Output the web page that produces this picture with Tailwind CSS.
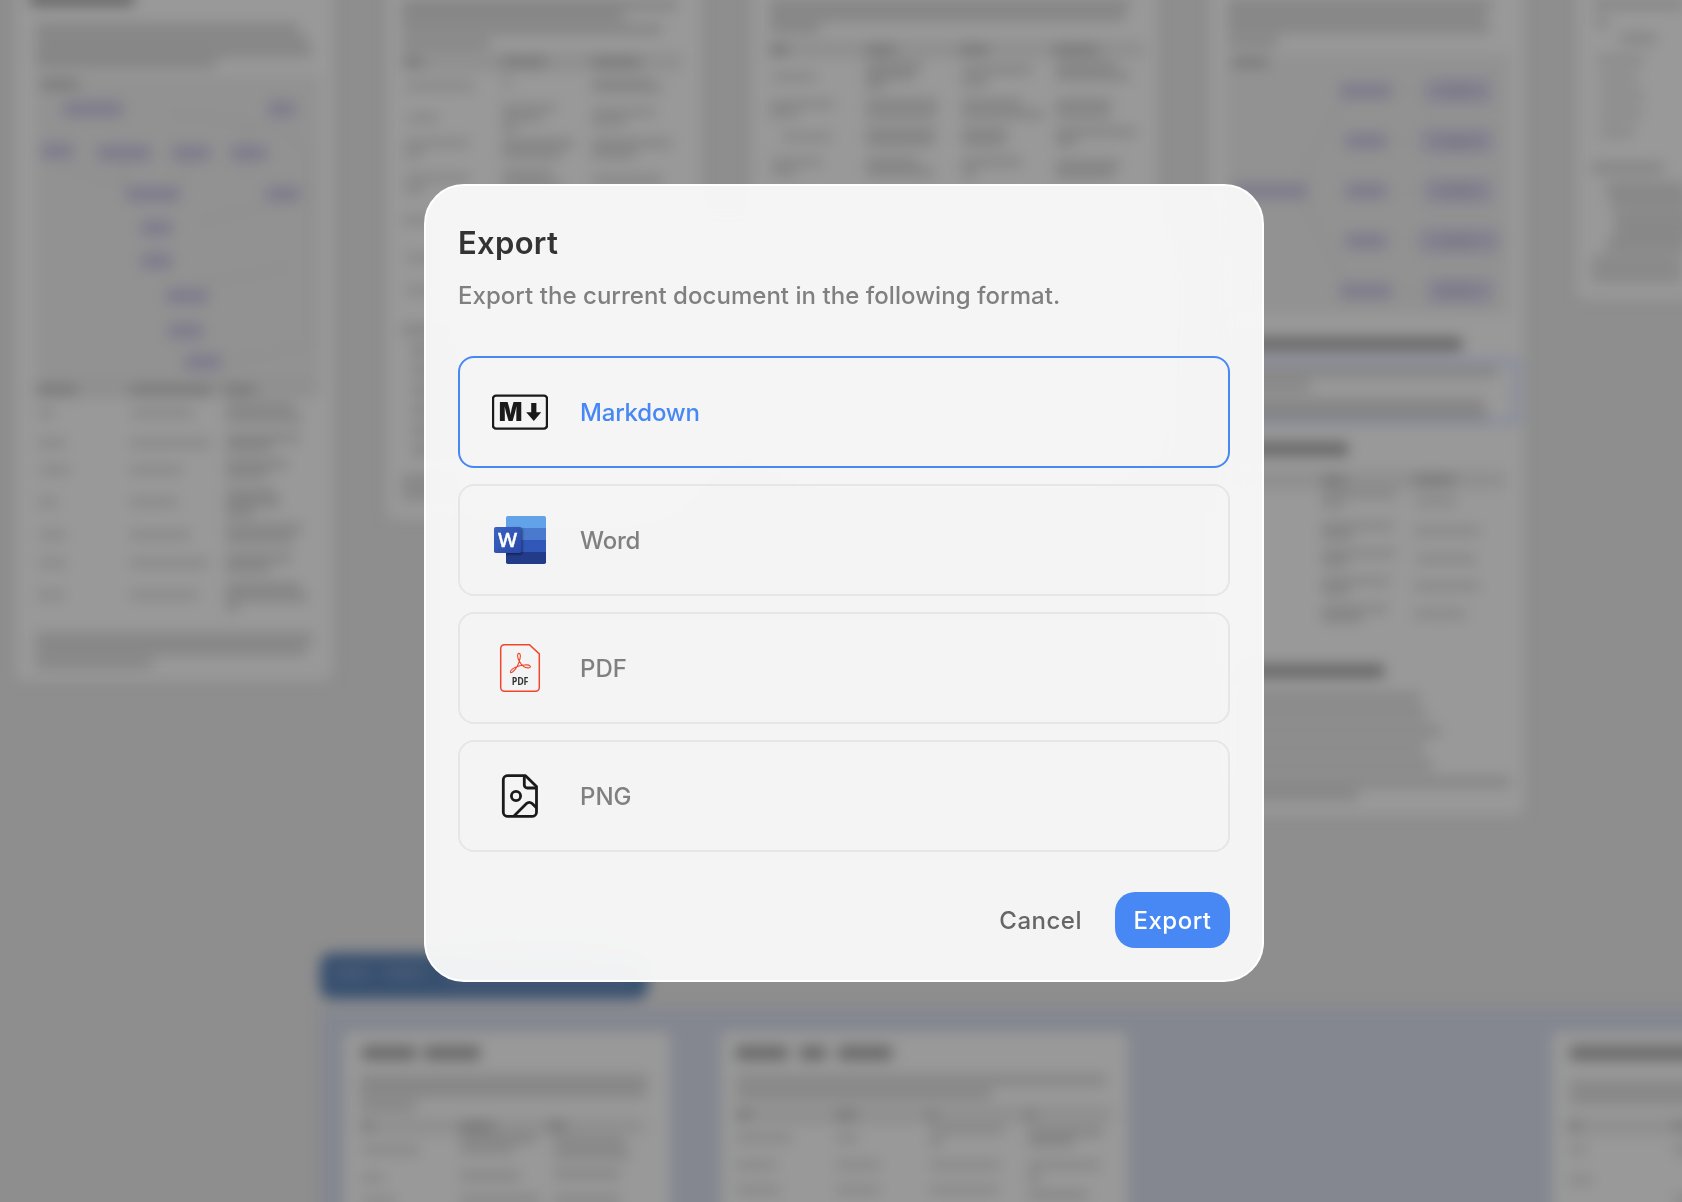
<!DOCTYPE html>
<html lang="en">
<head>
    <meta charset="UTF-8">
    <title>Export</title>
    <script src="https://cdn.jsdelivr.net/npm/@tailwindcss/browser@4"></script>
</head>
<body class="relative h-screen overflow-hidden bg-[#8e8e8e] font-['Inter',sans-serif]">
    <!-- Canvas behind the dialog -->
    <svg class="absolute inset-0" width="1682" height="1202" viewBox="0 0 1682 1202" fill="none" aria-hidden="true">
        <defs>
            <filter id="soft" filterUnits="userSpaceOnUse" x="-60" y="-60" width="1802" height="1322" color-interpolation-filters="sRGB">
                <feGaussianBlur stdDeviation="7"/>
            </filter>
        </defs>
        <g filter="url(#soft)">
            <!-- Frame with its label -->
            <rect x="320" y="1008" width="1440" height="260" fill="#848790"/>
            <rect x="320" y="953" width="328" height="46" rx="12" fill="#38506f"/>
            <path d="M336 973h32M385 973h38M450 978h180" stroke="#485b77" stroke-width="10"/>

            <!-- Cards -->
            <g fill="#999">
                <rect x="16" y="-40" width="317" height="720" rx="6"/>
                <rect x="387" y="-40" width="314" height="559" rx="6"/>
                <rect x="752" y="-40" width="405" height="520" rx="6"/>
                <rect x="1210" y="-40" width="314" height="855" rx="6"/>
                <rect x="1577" y="-40" width="200" height="339" rx="6"/>
                <rect x="344" y="1032" width="326" height="240" rx="6"/>
                <rect x="721" y="1032" width="407" height="240" rx="6"/>
                <rect x="1552" y="1032" width="200" height="240" rx="6"/>
            </g>

            <!-- Diagram areas and table heads -->
            <g fill="#929292">
                <rect x="36" y="75" width="284" height="305"/>
                <rect x="1226" y="54" width="284" height="260"/>
            </g>
            <g fill="#8f8f8f">
                <rect x="34" y="380" width="284" height="18"/>
                <rect x="402" y="53" width="280" height="18"/>
                <rect x="768" y="41" width="376" height="17"/>
                <rect x="1226" y="471" width="280" height="18"/>
                <rect x="360" y="1118" width="284" height="17"/>
                <rect x="736" y="1106" width="376" height="18"/>
                <rect x="1566" y="1118" width="150" height="17"/>
            </g>

            <!-- Selected block -->
            <rect x="1226" y="361" width="290" height="61" stroke="#858ba0" stroke-width="6"/>

            <!-- Diagram edges -->
            <path d="M170 113l110 14 30 28v190l-90 18M60 165l70 24M125 160v25M190 160l-10 25M247 120v60M200 222l80-22M200 285l90-18M1300 175l50-85M1300 195l50 95M1400 91h20M1400 141h20M1400 191h20M1400 241h20M1400 291h20" stroke="#8a8a8a" stroke-width="2"/>

            <!-- Diagram nodes -->
            <path d="M63 109h60M268 109h28M41 151h32M97 153h54M172 153h38M231 153h36M126 194h54M266 194h34M141 228h31M141 261h31M166 296h42M168 331h35M185 362h36
                M1340 91h52M1345 141h42M1232 191h76M1345 191h42M1345 241h42M1340 291h52" stroke="#7f7c8c" stroke-width="16"/>
            <path d="M1425 91h66M1422 141h70M1425 191h66M1420 241h78M1428 291h64" stroke="#84818f" stroke-width="24"/>
            <path d="M1442 91h32M1440 143h36M1442 191h32M1440 241h34M1440 291h32" stroke="#7d7a88" stroke-width="11"/>

            <!-- Headings -->
            <path d="M30 -1h104M1240 344h222M1240 449h108M1240 671h144M362 1053h54M424 1053h56M736 1053h52M800 1053h26M838 1053h54M1570 1053h130" stroke="#686868" stroke-width="14"/>

            <!-- Paragraphs -->
            <path d="M36 28h262M36 40h272M36 52h276M36 63h180M402 5h275M402 16h222M402 29h260M402 44h88M770 4h360M770 16h355M770 28h50M1228 4h264M1228 16h258M1228 28h262M1228 42h50
                M36 638h277M36 650h270M36 663h116M1594 4h90M1596 22h12M1620 38h36M1592 262h90M1592 276h90
                M1240 372h258M1240 386h70M1240 404h244M1240 415h248
                M1240 698h180M1240 714h186M1240 731h200M1240 748h184M1240 765h192M1240 782h270M1240 795h118
                M360 1080h288M360 1092h286M360 1106h56M736 1080h370M736 1094h256M1570 1086h130M1570 1099h130" stroke="#848484" stroke-width="10"/>
            <path d="M402 330h60M410 350h60M412 370h60M412 390h60M412 410h60M412 430h60M412 450h60M402 480h60M402 494h60M1592 168h72M1606 188h80M1610 202h80M1614 218h80M1614 232h80M1606 246h80" stroke="#848484" stroke-width="11"/>

            <!-- Table heads -->
            <path d="M40 84h38M1232 62h36M37 390h40M130 390h82M224 390h32M404 62h18M502 62h44M592 62h48M770 50h18M866 50h30M960 50h28M1054 50h44M1322 480h24M1414 480h40M362 1126h10M460 1126h34M548 1126h18M736 1115h14M836 1115h20M928 1115h8M1026 1115h8M1570 1126h10M1674 1126h14" stroke="#797979" stroke-width="10"/>

            <!-- Table cells -->
            <path d="M38 413h16M38 443h28M40 470h30M38 502h20M40 535h26M40 563h26M38 595h26
                M132 413h62M130 443h80M130 470h52M130 502h48M130 535h60M130 563h78M130 595h68
                M406 86h68M408 118h30M405 143h64M405 154h18M405 178h64M405 190h20M402 220h60M406 258h60M406 290h60
                M502 82h10M592 82h60M502 108h54M502 118h40M502 128h14M592 112h64M592 122h34
                M772 77h44M770 104h64M770 114h28M782 137h50M772 162h50M772 172h24
                M1622 40h34M1598 60h46M1600 78h38M1600 96h44M1600 114h42M1600 132h34
                M1322 494h74M1322 504h22M1416 501h40M1322 526h72M1414 531h66M1322 553h74M1416 559h60M1322 581h68M1414 586h66M1322 609h66M1414 614h52
                M362 1150h58M362 1178h22M362 1202h34M460 1150h54M736 1138h56M736 1165h40M736 1190h44M836 1138h22M836 1165h44M836 1190h44M930 1130h74M930 1165h70M930 1190h68M1028 1165h72M1570 1150h16M1570 1180h22" stroke="#878787" stroke-width="9"/>
            <path d="M226 407h68M226 418h76M226 438h74M226 447h46M226 464h62M226 474h42M226 493h50M226 503h54M226 512h28M226 528h76M226 539h68M226 558h66M226 568h44M226 587h74M226 597h82M226 607h12
                M592 88h70M502 143h72M502 154h60M592 143h80M592 154h44M502 174h50M502 186h60M592 180h70
                M866 66h56M866 76h48M866 85h18M962 70h70M962 82h26M1056 66h60M1056 76h74M866 103h72M866 114h70M962 103h60M962 114h82M1056 103h56M1056 114h54
                M866 132h70M866 142h68M962 132h46M962 142h44M1056 132h80M1056 142h20M866 162h52M866 172h68M962 162h60M962 173h14M1056 164h64M1056 174h58
                M1322 535h30M1322 562h26M1322 590h28M1322 618h40
                M460 1139h76M554 1142h70M554 1154h76M460 1176h60M460 1200h80M554 1174h66M554 1200h66M930 1142h12M1028 1132h74M1028 1142h46M1028 1178h12M1028 1195h60M1674 1150h30M1674 1200h30" stroke="#848484" stroke-width="9"/>
        </g>
    </svg>

    <!-- Export dialog -->
    <main class="flex justify-center pt-[184px] pl-1.5">
        <section role="dialog" aria-labelledby="export-title" class="relative flex h-[798px] w-[840px] flex-col rounded-[40px] border-2 border-white bg-[#fafafa]/95 p-8 backdrop-blur-2xl">
            <h1 id="export-title" class="text-[31px] leading-[50px] font-semibold tracking-[0.3px] text-[#333]">Export</h1>
            <p class="mt-3 text-[24px] leading-8 font-[450] tracking-[0.04px] whitespace-nowrap text-[#808080]">Export the current document in the following format.</p>

            <div class="mt-11 flex flex-col gap-4 text-[24px] font-[450] tracking-[-0.2px] text-[#808080]">
                <button class="flex h-28 items-center gap-8 rounded-2xl border-2 border-[#4788f4] px-8 text-[#4788f4]">
                    <svg class="w-14" viewBox="0 0 56 56" height="56" fill="none">
                        <rect x="1" y="11.6" width="54" height="33" rx="3" stroke="#1a1a1a" stroke-width="2.4"/>
                        <text x="6.8" y="37.3" font-family="Inter" font-size="25.5" font-weight="900" fill="#1a1a1a" textLength="23.5" lengthAdjust="spacingAndGlyphs">M</text>
                        <path d="M39.2 19h5.2v9.2h4.8L41.8 37l-7.6-8.800h5z" fill="#1a1a1a"/>
                    </svg>
                    <span class="pt-0.5">Markdown</span>
                </button>
                <button class="flex h-28 items-center gap-8 rounded-2xl border-2 border-[#e6e6e6] px-8">
                    <svg class="w-14" viewBox="0 0 56 56" height="56">
                        <defs>
                            <linearGradient id="tile" x1="0" y1="0" x2="1" y2="1">
                                <stop stop-color="#3a64c2"/>
                                <stop offset="1" stop-color="#2a47a8"/>
                            </linearGradient>
                            <clipPath id="sheet"><rect x="14" y="4" width="40" height="48" rx="1.8"/></clipPath>
                            <filter id="drop"><feGaussianBlur stdDeviation=".8"/></filter>
                        </defs>
                        <g clip-path="url(#sheet)">
                            <path d="M14 4h40v12H14z" fill="#62a2e8"/>
                            <path d="M14 16h40v12H14z" fill="#4a7acd"/>
                            <path d="M14 28h40v12H14z" fill="#3158b9"/>
                            <path d="M14 40h40v12H14z" fill="#233c8a"/>
                            <rect x="3" y="16" width="27.5" height="26.5" rx="2" fill="#000" opacity=".45" filter="url(#drop)"/>
                        </g>
                        <rect x="2" y="15" width="27.5" height="26" rx="1.8" fill="url(#tile)"/>
                        <text x="6" y="35" font-family="Open Sans" font-size="19.5" font-weight="600" fill="#fff" stroke="#fff" stroke-width=".3" textLength="19" lengthAdjust="spacingAndGlyphs">W</text>
                    </svg>
                    <span class="pt-0.5">Word</span>
                </button>
                <button class="flex h-28 items-center gap-8 rounded-2xl border-2 border-[#e6e6e6] px-8">
                    <svg class="w-14" viewBox="0 0 56 56" height="56" fill="none">
                        <path d="M12.5 4.7h25l9.8 9.2v33.6a3.8 3.8 0 0 1-3.8 3.8h-31a3.8 3.8 0 0 1-3.8-3.8v-39a3.8 3.8 0 0 1 3.8-3.8z" stroke="#f1452c" stroke-width="1.5"/>
                        <path d="M27 13.4c-2 0-1.7 4.2.2 7.6 2.1 3.8 5.7 7.2 9.3 6.9 3.6-.3 2.2-3.5-3.9-2.9-5.2.5-9.8 2.1-12.3 4.2-2.7 2.2-2.4 4.6.2 2.8 3.2-2.4 6.4-8.6 7.5-13.400.7-3.200.3-5.200-1-5.200z" stroke="#f1452c" stroke-width="1.1"/>
                        <text x="19.8" y="44.8" font-family="Open Sans" font-size="10.2" font-weight="700" fill="#333" textLength="16.5" lengthAdjust="spacingAndGlyphs">PDF</text>
                    </svg>
                    <span class="pt-0.5 tracking-normal">PDF</span>
                </button>
                <button class="flex h-28 items-center gap-8 rounded-2xl border-2 border-[#e6e6e6] px-8">
                    <svg class="w-14" viewBox="0 0 56 56" height="56" fill="none" stroke="#1a1a1a" stroke-width="2.8" stroke-linejoin="round">
                        <path d="M33.5 7.7H15.3a4 4 0 0 0-4 4v32.6a4 4 0 0 0 4 4h25.2a4 4 0 0 0 4-4V18.5z"/>
                        <path d="M32.3 7.7V17a3 3 0 0 0 3 3h9.2"/>
                        <circle cx="24" cy="28" r="4.6"/>
                        <path d="M22 48l12.5-12.4a4 4 0 0 1 5.6 0l4.4 4.2"/>
                    </svg>
                    <span class="pt-0.5 tracking-normal">PNG</span>
                </button>
            </div>

            <div class="mt-10 flex justify-end gap-4 text-[24px] font-[450] tracking-[0.5px]">
                <button class="h-14 px-[17px] pt-0.5 text-[#666]">Cancel</button>
                <button class="h-14 w-[115px] rounded-[20px] bg-[#4788f4] pt-0.5 text-white">Export</button>
            </div>
        </section>
    </main>
</body>
</html>
